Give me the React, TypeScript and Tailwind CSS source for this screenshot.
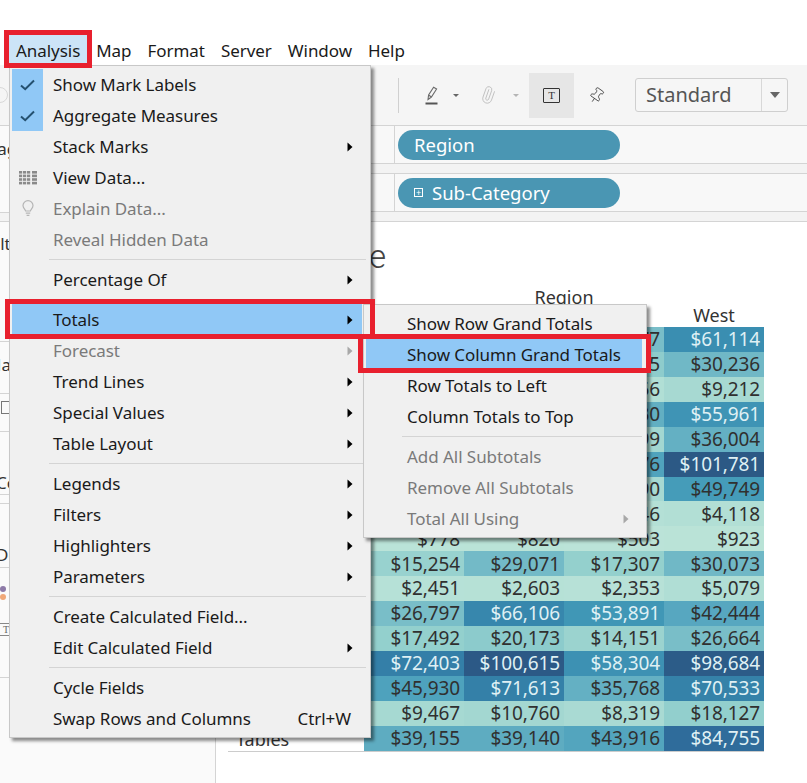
import { Paperclip, Pin } from 'lucide-react';

const font = "font-['Noto_Sans','Liberation_Sans',sans-serif]";

const stops: [number, number[]][] = [
  [0, [188, 228, 216]],
  [18000, [146, 207, 205]],
  [30000, [112, 184, 198]],
  [42000, [88, 168, 192]],
  [50000, [68, 156, 185]],
  [60000, [59, 143, 178]],
  [72000, [52, 128, 168]],
  [85000, [47, 108, 155]],
  [101000, [44, 89, 133]],
];

function cellColor(v: number) {
  for (let i = 1; i < stops.length; i++) {
    const [x1, c1] = stops[i];
    if (v <= x1) {
      const [x0, c0] = stops[i - 1];
      const t = (v - x0) / (x1 - x0);
      return `rgb(${c0.map((c, k) => Math.round(c + (c1[k] - c) * t)).join(',')})`;
    }
  }
  return 'rgb(44,89,133)';
}

const rows: [string, number, number, number, number][] = [
  ['Accessories', 33956, 43033, 27277, 61114],
  ['Appliances', 23582, 34188, 19525, 30236],
  ['Art', 5765, 7486, 4656, 9212],
  ['Binders', 56923, 53498, 37030, 55961],
  ['Bookcases', 24157, 43819, 10899, 36004],
  ['Chairs', 85231, 96247, 45176, 101781],
  ['Copiers', 37260, 53219, 9490, 49749],
  ['Envelopes', 4636, 4378, 3346, 4118],
  ['Fasteners', 778, 820, 503, 923],
  ['Furnishings', 15254, 29071, 17307, 30073],
  ['Labels', 2451, 2603, 2353, 5079],
  ['Machines', 26797, 66106, 53891, 42444],
  ['Paper', 17492, 20173, 14151, 26664],
  ['Phones', 72403, 100615, 58304, 98684],
  ['Storage', 45930, 71613, 35768, 70533],
  ['Supplies', 9467, 10760, 8319, 18127],
  ['Tables', 39155, 39140, 43916, 84755],
];

function Cell({ v }: { v: number }) {
  return (
    <div
      className={`h-[24.93px] flex items-center justify-end pr-[4px] text-[19px] tracking-[-0.1px] ${
        v > 50000 ? 'text-[#dff0f4]' : 'text-[#303030]'
      }`}
      style={{ backgroundColor: cellColor(v) }}
    >
      ${v.toLocaleString('en-US')}
    </div>
  );
}

function Arrow({ muted }: { muted?: boolean }) {
  return (
    <svg width="6" height="10" viewBox="0 0 6 10" className="flex-shrink-0">
      <path d="M0.5 0.5 L5.5 5 L0.5 9.5 Z" fill={muted ? '#a8a8a8' : '#000'} />
    </svg>
  );
}

function Check() {
  return (
    <svg width="15" height="12" viewBox="0 0 15 12" fill="none" className="flex-shrink-0">
      <path d="M1 6.5 L5.2 10.2 L14 1.5" stroke="#24506f" strokeWidth="2" />
    </svg>
  );
}

function GridIcon() {
  return (
    <svg width="18" height="14" viewBox="0 0 18 14" className="flex-shrink-0">
      {[0, 3.6, 7.2, 10.8].map((y) =>
        [0, 4, 8, 13].map((x, i) => (
          <rect key={`${x}-${y}`} x={x} y={y} width={i === 3 ? 5 : 3.2} height="2.6" fill="#8a8a8a" />
        )),
      )}
    </svg>
  );
}

function BulbIcon() {
  return (
    <svg width="12" height="18" viewBox="0 0 12 18" fill="none" stroke="#b5b5b5" strokeWidth="1.2" className="flex-shrink-0">
      <path d="M3.6 11 C3.4 9.4 1 8.4 1 5.6 A5 5 0 0 1 11 5.6 C11 8.4 8.6 9.4 8.4 11 Z" />
      <path d="M3.8 13.2 H8.2 M4.6 15.4 H7.4" />
    </svg>
  );
}

type Item =
  | { sep: true }
  | {
      sep?: false;
      label: string;
      arrow?: boolean;
      muted?: boolean;
      active?: boolean;
      shortcut?: string;
      checked?: boolean;
      icon?: 'grid' | 'bulb';
    };

const mainItems: Item[] = [
  { label: 'Show Mark Labels', checked: true },
  { label: 'Aggregate Measures', checked: true },
  { label: 'Stack Marks', arrow: true },
  { label: 'View Data...', icon: 'grid' },
  { label: 'Explain Data...', icon: 'bulb', muted: true },
  { label: 'Reveal Hidden Data', muted: true },
  { sep: true },
  { label: 'Percentage Of', arrow: true },
  { sep: true },
  { label: 'Totals', arrow: true, active: true },
  { label: 'Forecast', arrow: true, muted: true },
  { label: 'Trend Lines', arrow: true },
  { label: 'Special Values', arrow: true },
  { label: 'Table Layout', arrow: true },
  { sep: true },
  { label: 'Legends', arrow: true },
  { label: 'Filters', arrow: true },
  { label: 'Highlighters', arrow: true },
  { label: 'Parameters', arrow: true },
  { sep: true },
  { label: 'Create Calculated Field...' },
  { label: 'Edit Calculated Field', arrow: true },
  { sep: true },
  { label: 'Cycle Fields' },
  { label: 'Swap Rows and Columns', shortcut: 'Ctrl+W' },
];

const subItems: Item[] = [
  { label: 'Show Row Grand Totals' },
  { label: 'Show Column Grand Totals', active: true },
  { label: 'Row Totals to Left' },
  { label: 'Column Totals to Top' },
  { sep: true },
  { label: 'Add All Subtotals', muted: true },
  { label: 'Remove All Subtotals', muted: true },
  { label: 'Total All Using', arrow: true, muted: true },
];

function Menu({ items, sub }: { items: Item[]; sub?: boolean }) {
  return (
    <div
      className={`absolute bg-[#f0f0f0] border border-[#c8c8c8] py-[3px] shadow-[3px_3px_3px_rgba(0,0,0,0.45)] text-[17px] tracking-[-0.05px] ${
        sub ? 'left-[363px] top-[304px] w-[284px] z-20' : 'left-[9px] top-[65px] w-[362px] z-10'
      }`}
    >
      {items.map((item, i) =>
        item.sep ? (
          <div key={i} className={`h-[9px] flex items-center ${sub ? 'ml-[38px] mr-[4px]' : 'ml-[39px] mr-[4px]'}`}>
            <div className="h-px w-full bg-[#d4d4d4]" />
          </div>
        ) : (
          <div
            key={i}
            className={`relative h-[31px] flex items-center ml-[2px] pl-[41px] ${sub ? 'mr-[4px] pr-[13px]' : 'mr-[8px] pr-[9px]'} ${
              item.active ? 'bg-[#90c8f6]' : ''
            } ${item.muted ? 'text-[#7a7a7a]' : 'text-[#1a1a1a]'}`}
          >
            {item.checked && (
              <div className="absolute left-0 top-0 w-[31px] h-full bg-[#90c8f6] flex items-center justify-center">
                <Check />
              </div>
            )}
            {item.icon && (
              <div className="absolute left-0 top-0 w-[31px] h-full flex items-center justify-center">
                {item.icon === 'grid' ? <GridIcon /> : <BulbIcon />}
              </div>
            )}
            <span className="flex-1 whitespace-nowrap">{item.label}</span>
            {item.arrow && <Arrow muted={item.muted} />}
            {item.shortcut && <span className="mr-[2px]">{item.shortcut}</span>}
          </div>
        ),
      )}
    </div>
  );
}

function Pill({ children }: { children: React.ReactNode }) {
  return (
    <div className="ml-[3px] w-[222px] h-[30px] rounded-full bg-[#4a96b3] text-white text-[18.5px] flex items-center pl-[16px]">
      {children}
    </div>
  );
}

function Shelf({ label, children }: { label: string; children: React.ReactNode }) {
  return (
    <div className="h-[39px] bg-[#f8f8f8] border-y border-[#d4d4d4] flex items-center">
      <div className="w-[179px] h-full border-r border-[#d4d4d4] pl-2 text-[15px] flex items-center text-[#444]">{label}</div>
      {children}
    </div>
  );
}

export default function App() {
  return (
    <div className={`relative w-[807px] h-[783px] overflow-hidden bg-white text-[#222] ${font}`}>
      {/* Menu bar */}
      <div className="h-[65px] pt-[35px] pl-[8px] flex items-start text-[17px] tracking-[-0.05px] text-[#1a1a1a]">
        <div className="h-[29px] px-2 pt-[2px] flex items-center bg-[#cce4f7]">Analysis</div>
        <div className="h-[29px] px-2 pt-[2px] flex items-center">Map</div>
        <div className="h-[29px] px-2 pt-[2px] flex items-center">Format</div>
        <div className="h-[29px] px-2 pt-[2px] flex items-center">Server</div>
        <div className="h-[29px] px-2 pt-[2px] flex items-center">Window</div>
        <div className="h-[29px] px-2 pt-[2px] flex items-center">Help</div>
      </div>

      {/* Toolbar */}
      <div className="h-[60px] bg-[#f5f5f5] flex items-center">
        <div className="w-[398px] h-full flex items-center overflow-hidden">
          <div className="-ml-[8px] w-[16px] h-[16px] rounded-full border border-[#d8d8d8]" />
        </div>
        <div className="w-px h-[35px] bg-[#d0d0d0]" />
        <div className="ml-[26px] w-[13px] flex-shrink-0">
          <svg width="13" height="19" viewBox="0 0 13 19" fill="none" stroke="#6a6a6a" strokeWidth="1.1">
            <path d="M3 13.5 L3.6 9 L8.6 1.2 L11.6 3 L6.4 11 Z M3.6 9 L6.4 11" />
            <path d="M0.5 17.5 H12.5" stroke="#555" strokeWidth="2" />
          </svg>
        </div>
        <div className="ml-[15px] w-0 h-0 border-x-[3px] border-x-transparent border-t-[3px] border-t-[#666]" />
        <Paperclip size={18} strokeWidth={1.1} className="ml-[20px] text-[#bdbdbd] rotate-[-25deg]" />
        <div className="ml-[16px] w-0 h-0 border-x-[3px] border-x-transparent border-t-[3px] border-t-[#b5b5b5]" />
        <div className="ml-[10px] w-[45px] h-[45px] bg-[#e6e6e6] flex items-center justify-center">
          <div className="w-[17px] h-[15px] border border-[#333] rounded-[1px] flex items-center justify-center font-['Liberation_Serif',serif] text-[11px] leading-none text-[#333]">
            T
          </div>
        </div>
        <Pin size={17} strokeWidth={1.2} className="ml-[14px] text-[#444] rotate-[35deg]" />
        <div className="ml-[30px] w-[153px] h-[34px] border border-[#cfcfcf] rounded-[3px] flex items-center bg-[#f6f6f6]">
          <div className="flex-1 pl-[10px] text-[20px] text-[#555]">Standard</div>
          <div className="w-[26px] h-full border-l border-[#d8d8d8] flex items-center justify-center">
            <div className="w-0 h-0 border-x-[5px] border-x-transparent border-t-[6px] border-t-[#666]" />
          </div>
        </div>
      </div>

      <div className="flex h-[658px]">
        {/* Sidebar */}
        <div className="w-[216px] flex-shrink-0 border-r border-t border-[#d4d4d4] bg-[#fafafa] text-[17px] text-[#333] overflow-hidden whitespace-nowrap">
          <div className="h-[87px] border-b border-[#d4d4d4] pt-[10px] -ml-[13px]">Pages</div>
          <div className="h-[9px] bg-[#f3f3f3] border-b border-[#d4d4d4]" />
          <div className="h-[120px] border-b border-[#d4d4d4] pt-[9px] -ml-[13px]">Filters</div>
          <div className="h-[52px] border-b border-[#d4d4d4] pt-[10px] -ml-[14px]">Marks</div>
          <div className="h-[38px] border-b border-[#d4d4d4] pt-[7px] pl-[1px]">
            <div className="w-[14px] h-[13px] border border-[#777]" />
          </div>
          <div className="h-[63px] border-b border-[#d4d4d4] pt-[38px] -ml-[4px]">Color</div>
          <div className="h-[9px] border-b border-[#d4d4d4]" />
          <div className="h-[64px] border-b border-[#d4d4d4] pt-[38px] -ml-[4px]">Detail</div>
          <div className="h-[110px] border-b border-[#d4d4d4] pt-[18px]">
            <div className="w-[6px] h-[6px] rounded-full bg-[#8e7ba8]" />
            <div className="mt-[2px] w-[6px] h-[6px] rounded-full bg-[#f0a878]" />
            <div className="mt-[23px] w-[30px] h-[13px] border-y border-[#888] pl-[3px] font-['Liberation_Serif',serif] text-[10px] leading-[11px] text-[#666]">
              T
            </div>
          </div>
        </div>

        <div className="flex-1 flex flex-col">
          <Shelf label="Columns">
            <Pill>Region</Pill>
          </Shelf>
          <div className="h-[9px] bg-[#f3f3f3]" />
          <Shelf label="Rows">
            <Pill>
              <span className="w-[9px] h-[9px] border border-white mr-[9px] flex items-center justify-center text-[9px] leading-none">+</span>
              Sub-Category
            </Pill>
          </Shelf>
          <div className="h-[10px] bg-[#f3f3f3] border-b border-[#d4d4d4]" />

          {/* Sheet */}
          <div className="flex-1 pl-[12px]">
            <div className="h-[64px] pt-[6px] flex items-center justify-end pr-[421px] font-['Roboto',sans-serif] font-light text-[33px] text-[#444]">
              Table
            </div>
            <div className="w-[536px] grid grid-cols-[136px_repeat(4,100px)] border-b border-[#ccc]">
              <div className="col-span-1" />
              <div className="col-span-4 h-[22px] flex items-center justify-center text-[18px] text-[#333]">Region</div>
              <div />
              {['Central', 'East', 'South', 'West'].map((c) => (
                <div key={c} className="h-[19px] pb-[4px] flex items-center justify-center text-[18px] text-[#333]">
                  {c}
                </div>
              ))}
              {rows.map(([name, a, b, c, d]) => (
                <div key={name} className="contents">
                  <div className="h-[24.93px] pl-[8px] pt-[2px] flex items-center text-[18px] text-[#333]">{name}</div>
                  <Cell v={a} />
                  <Cell v={b} />
                  <Cell v={c} />
                  <Cell v={d} />
                </div>
              ))}
            </div>
          </div>
        </div>
      </div>

      <Menu items={mainItems} />
      <Menu items={subItems} sub />

      {/* Red callouts */}
      <div className="absolute z-30 left-[4px] top-[30px] w-[88px] h-[38px] border-[5px] border-[#e8202e]" />
      <div className="absolute z-30 left-[5px] top-[299px] w-[370px] h-[40px] border-[5px] border-[#e8202e]" />
      <div className="absolute z-30 left-[358px] top-[334px] w-[293px] h-[39px] border-[5px] border-[#e8202e]" />
    </div>
  );
}
